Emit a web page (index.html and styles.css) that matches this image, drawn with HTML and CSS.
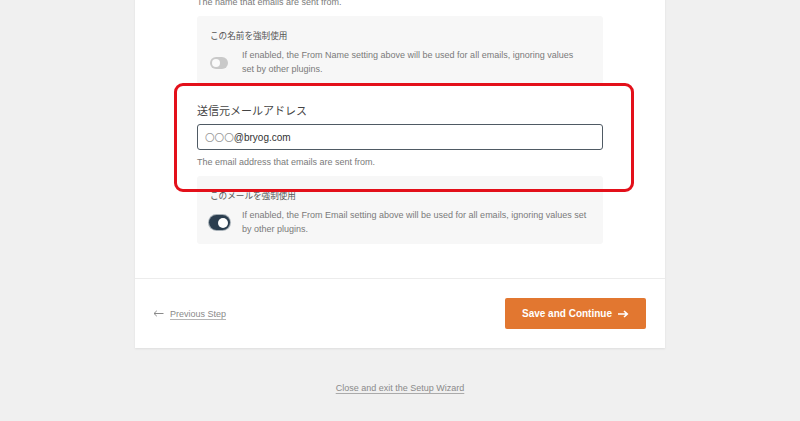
FILE: index.html
```html
<!DOCTYPE html>
<html lang="ja">
<head>
<meta charset="utf-8">
<title>Setup Wizard</title>
<link rel="stylesheet" href="styles.css">
</head>
<body>
<div class="card">
  <div class="card-body">
    <p class="desc desc-top">The name that emails are sent from.</p>
    <div class="opt-box">
      <div class="opt-label">この名前を強制使用</div>
      <div class="opt-row">
        <span class="toggle-wrap"><span class="toggle toggle-off"><span class="knob"></span></span></span>
        <span class="opt-text">If enabled, the From Name setting above will be used for all emails, ignoring values set by other plugins.</span>
      </div>
    </div>
    <div class="field">
      <label class="field-label">送信元メールアドレス</label>
      <div class="input"><span class="circles">〇〇〇</span>@bryog.com</div>
      <p class="desc">The email address that emails are sent from.</p>
      <div class="highlight"></div>
    </div>
    <div class="opt-box opt-box-2">
      <div class="opt-label">このメールを強制使用</div>
      <div class="opt-row">
        <span class="toggle-wrap"><span class="toggle toggle-on"><span class="knob"></span></span></span>
        <span class="opt-text">If enabled, the From Email setting above will be used for all emails, ignoring values set by other plugins.</span>
      </div>
    </div>
  </div>
  <div class="card-footer">
    <a class="prev" href="#">
      <svg class="prev-arrow" width="11" height="7" viewBox="0 0 11 7"><path d="M10.5 3.5H1M3.8 0.8L1 3.5L3.8 6.2" fill="none" stroke="#8a8a8a" stroke-width="1"/></svg>
      <span class="prev-text">Previous Step</span>
    </a>
    <button class="btn-save">Save and Continue
      <svg class="save-arrow" width="11" height="8" viewBox="0 0 11 8"><path d="M0 4H9M6 1L9.3 4L6 7" fill="none" stroke="#fff" stroke-width="1.6"/></svg>
    </button>
  </div>
</div>
<div class="exit"><a href="#" class="exit-link">Close and exit the Setup Wizard</a></div>
</body>
</html>
```
FILE: styles.css
```css
html, body {
  margin: 0;
  padding: 0;
}
body {
  background: #f0f0f0;
  font-family: "Liberation Sans", "Noto Sans CJK JP", sans-serif;
  color: #444;
  width: 800px;
  height: 421px;
  overflow: hidden;
}
.card {
  width: 530px;
  margin: -5px 0 0 135px;
  background: #fff;
  box-shadow: 0 1px 2px rgba(0,0,0,0.08);
}
.card-body {
  padding: 0 62px 34px;
}
.desc {
  margin: 0;
  font-size: 9px;
  line-height: 14px;
  color: #7a7a7a;
}
.opt-box {
  margin-top: 7px;
  background: #f7f7f7;
  border-radius: 3px;
  padding: 12px 13px 8px;
  height: 48px;
}
.opt-label {
  font-family: "Noto Sans CJK JP", sans-serif;
  font-size: 8.6px;
  line-height: 15px;
  color: #555;
}
.opt-row {
  margin-top: 6px;
  display: flex;
  align-items: center;
}
.toggle-wrap {
  flex: 0 0 22px;
  margin-right: 10px;
  display: flex;
  align-items: center;
}
.toggle {
  position: relative;
  display: block;
  border-radius: 8px;
}
.toggle-off {
  width: 18px;
  height: 12px;
  background: #c9c9c9;
}
.toggle-off .knob {
  position: absolute;
  left: 2px;
  top: 2px;
  width: 8px;
  height: 8px;
  border-radius: 50%;
  background: #fafafa;
}
.toggle-on {
  width: 21px;
  height: 15px;
  margin-left: -1px;
  background: #2b3e4f;
  box-shadow: 0 0 0 1px #a7b0b7;
}
.toggle-on .knob {
  position: absolute;
  right: 2px;
  top: 2.5px;
  width: 10px;
  height: 10px;
  border-radius: 50%;
  background: #fff;
}
.opt-text {
  max-width: 345px;
  font-size: 9px;
  line-height: 13.5px;
  color: #7a7a7a;
}
.field {
  position: relative;
  padding-top: 18px;
}
.field-label {
  display: block;
  font-family: "Noto Sans CJK JP", sans-serif;
  font-size: 11px;
  line-height: 16px;
  color: #444;
  margin-bottom: 6px;
}
.input {
  height: 24px;
  border: 1px solid #4f5a64;
  border-radius: 3px;
  background: #fff;
  padding: 0 7px;
  font-size: 10px;
  line-height: 24px;
  color: #333;
}
.circles {
  font-family: "Noto Sans CJK JP", sans-serif;
  color: #999;
  font-size: 9.6px;
}
.field .desc {
  margin-top: 5px;
}
.highlight {
  position: absolute;
  top: -1px;
  left: -23px;
  right: -31px;
  height: 103px;
  border: 3px solid #e3101a;
  border-radius: 9px;
  pointer-events: none;
  z-index: 2;
}
.card-footer {
  border-top: 1px solid #ececec;
  padding: 19px 19px 19px 18px;
  display: flex;
  justify-content: space-between;
  align-items: center;
}
.prev {
  display: flex;
  align-items: center;
  gap: 6px;
  text-decoration: none;
  color: #8a8a8a;
  font-size: 9px;
}
.prev-text {
  text-decoration: underline;
  text-decoration-color: #b5b5b5;
  text-underline-offset: 2px;
}
.btn-save {
  height: 31px;
  width: 141px;
  border: none;
  border-radius: 2px;
  background: #e27730;
  color: #fff;
  font-family: "Liberation Sans", sans-serif;
  font-weight: bold;
  font-size: 10px;
  display: flex;
  align-items: center;
  justify-content: center;
  gap: 6px;
  padding: 0;
}
.exit {
  margin-top: 33px;
  text-align: center;
  font-size: 9px;
  line-height: 14px;
}
.exit-link {
  color: #8a8a8a;
  text-decoration: underline;
  text-decoration-color: #aaa;
  text-underline-offset: 2px;
}
```
